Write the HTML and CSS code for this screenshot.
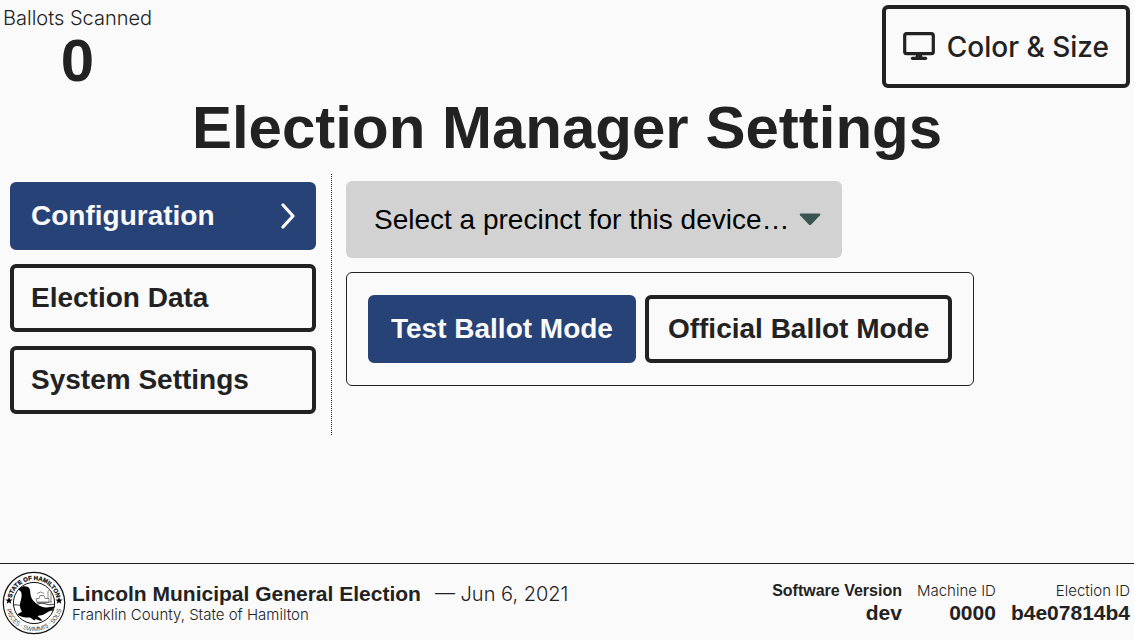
FILE: index.html
```html
<!DOCTYPE html>
<html lang="en">
<head>
<meta charset="utf-8">
<meta name="viewport" content="width=device-width, initial-scale=1">
<title>Election Manager Settings</title>
<link rel="stylesheet" href="styles.css">
</head>
<body>
<header class="topbar">
  <div class="counter">
    <span class="counter-label">Ballots Scanned</span>
    <span class="counter-value">0</span>
  </div>
  <button class="button display-button" type="button">
    <svg class="display-icon" viewBox="0 0 32 29" aria-hidden="true">
      <rect x="1.7" y="1.7" width="28.6" height="20" rx="2" fill="none" stroke="currentColor" stroke-width="3.2"/>
      <path d="M13.2 22h5.6l.7 3h-7z" fill="currentColor"/>
      <path d="M9.4 26.3h13.2" stroke="currentColor" stroke-width="3.2" stroke-linecap="round"/>
    </svg>
    <span>Color &amp; Size</span>
  </button>
</header>
<h1 class="title">Election Manager Settings</h1>
<div class="content">
  <nav class="tabs" aria-label="Settings">
    <button class="button button-primary tab" type="button" aria-current="page">
      <span>Configuration</span>
      <svg class="chevron" viewBox="0 0 16 26" aria-hidden="true">
        <path d="M4 2l10 11L4 24" fill="none" stroke="currentColor" stroke-width="3.2" stroke-linecap="round" stroke-linejoin="round"/>
      </svg>
    </button>
    <button class="button tab" type="button">Election Data</button>
    <button class="button tab" type="button">System Settings</button>
  </nav>
  <main class="panel">
    <div class="picker">
      <select class="picker-select" aria-label="Precinct">
        <option>Select a precinct for this device…</option>
      </select>
      <svg class="picker-arrow" viewBox="0 0 22 13" aria-hidden="true">
        <path d="M1.5.5h19q1.5.3.5 1.700l-9 9.500q-1 .8-2 0l-9-9.500Q0 .8 1.500.5z" fill="#3a5450"/>
      </svg>
    </div>
    <div class="mode-card" role="group" aria-label="Ballot mode">
      <button class="button button-primary mode" type="button" aria-pressed="true">Test Ballot Mode</button>
      <button class="button mode" type="button" aria-pressed="false">Official Ballot Mode</button>
    </div>
  </main>
</div>
<footer class="footer">
  <svg class="seal" viewBox="0 0 64 64" role="img" aria-label="Seal of the State of Hamilton">
    <defs>
      <path id="arc-top" d="M9 32a23 23 0 0 1 46 0"/>
      <path id="arc-bottom" d="M3.800 32a28.200 28.200 0 0 0 56.400 0"/>
    </defs>
    <circle cx="32" cy="32" r="30.700" fill="#fff" stroke="#111" stroke-width="1.200"/>
    <circle cx="32" cy="32" r="20.600" fill="none" stroke="#111" stroke-width="1"/>
    <text class="seal-name"><textPath href="#arc-top" startOffset="50%">STATE OF HAMILTON</textPath></text>
    <text class="seal-motto"><textPath href="#arc-bottom" startOffset="50%">PISCES · SWIMMIS · SOLIS</textPath></text>
    <path id="star" d="M7 26l1 2.400 2.600.1-2 1.700.7 2.500L7 31.300l-2.300 1.400.7-2.500-2-1.700 2.600-.1z" fill="#000"/>
    <use href="#star" x="50"/>
    <path d="M12 34c3-1 4 1 7 0m10-1c3-1 4 1 7 0s5-1 8 0 5 1 8 0" fill="none" stroke="#222" stroke-width=".9"/>
    <path d="M34 27.500h3l1-3h4l1 3h4v4H35zm1-5q4-3 7 0m4 5v-7l1.500-2 1.500 2v11M35 31h15" fill="none" stroke="#555" stroke-width=".7"/>
    <path d="M16.500 17.500l4-2c3-.5 5.800 0 7 2 1 2 .6 4 1.200 7 .8 3.500 3 6 6 8.500 3 2.300 6 3.300 9.300 3.500 3 .2 5-1 9.500-1l-3 2.500 1 1.500c-4 .2-6 1.500-8 3-2.500 1.500-5 2-8 2.500 1 1.500 3.500 2.500 5 4.500-2.500.5-5-.5-7-1.500l-1 1.500-4.500-3c-4 .3-8 0-13-3l5-3c-2.300-3-2.500-6.500-1.500-10 1-3 1.500-6 .8-9-.5-1.500-2.300-2-2.800-4z" fill="#000"/>
  </svg>
  <div class="election">
    <div class="election-title"><strong>Lincoln Municipal General Election</strong><span class="election-date">— Jun 6, 2021</span></div>
    <div class="election-place">Franklin County, State of Hamilton</div>
  </div>
  <dl class="details">
    <div class="detail"><dt class="detail-label detail-label-strong">Software Version</dt><dd class="detail-value">dev</dd></div>
    <div class="detail"><dt class="detail-label">Machine ID</dt><dd class="detail-value">0000</dd></div>
    <div class="detail"><dt class="detail-label">Election ID</dt><dd class="detail-value">b4e07814b4</dd></div>
  </dl>
</footer>
</body>
</html>
```
FILE: styles.css
```css
* {
  box-sizing: border-box;
}

body {
  display: flex;
  flex-direction: column;
  min-height: 100vh;
  margin: 0;
  background: #fafafa;
  color: #222;
  font-family: "Liberation Sans", Arial, sans-serif;
}

.topbar {
  display: flex;
  justify-content: space-between;
  align-items: flex-start;
  padding: 5px 4px 0 3px;
}

.counter {
  display: flex;
  flex-direction: column;
  align-items: center;
}

.counter-label {
  font-family: Inter, sans-serif;
  font-size: 20px;
  font-weight: 300;
  line-height: 26px;
}

.counter-value {
  font-size: 60px;
  font-weight: 700;
  line-height: 60px;
}

.button {
  display: flex;
  align-items: center;
  min-height: 68px;
  padding: 0 17px;
  border: 4px solid #222;
  border-radius: 6px;
  background: #fafafa;
  color: #222;
  font-family: inherit;
  font-size: 28px;
  font-weight: 700;
  line-height: 32px;
}

.button-primary {
  border-color: #274277;
  background: #274277;
  color: #fafafa;
}

.display-button {
  gap: 12px;
  min-height: 83px;
  font-family: Inter, sans-serif;
  font-weight: 500;
}

.display-icon {
  width: 32px;
  height: 29px;
}

.title {
  margin: 2px 0 11px;
  font-size: 60px;
  font-weight: 700;
  line-height: 70px;
  text-align: center;
}

.content {
  display: flex;
  align-items: flex-start;
  flex: 1;
}

.tabs {
  display: flex;
  flex-direction: column;
  gap: 14px;
  flex: 0 0 332px;
  padding: 8px 15px 21px 10px;
  border-right: 1px dotted #222;
}

.tab {
  justify-content: space-between;
  text-align: left;
}

.chevron {
  width: 16px;
  height: 26px;
}

.panel {
  display: flex;
  flex-direction: column;
  align-items: flex-start;
  gap: 14px;
  padding: 7px 14px;
}

.picker {
  position: relative;
}

.picker-select {
  appearance: none;
  height: 77px;
  padding: 0 52px 0 28px;
  border: 0;
  border-radius: 6px;
  background: #d2d2d2;
  color: #000;
  font-family: inherit;
  font-size: 28px;
}

.picker-arrow {
  position: absolute;
  top: 32px;
  right: 21px;
  width: 22px;
  height: 13px;
  pointer-events: none;
}

.mode-card {
  display: flex;
  gap: 9px;
  padding: 22px 21px;
  border: 1px solid #222;
  border-radius: 6px;
}

.mode {
  padding: 0 19px;
}

.footer {
  display: flex;
  align-items: center;
  gap: 6px;
  padding: 7px 4px 5px 2px;
  border-top: 1px solid #222;
}

.seal {
  flex: none;
  width: 64px;
  height: 64px;
}

.seal-name {
  font-size: 6px;
  font-weight: 700;
  stroke: #222;
  stroke-width: 0.3;
  text-anchor: middle;
}

.seal-motto {
  font-family: Inter, sans-serif;
  font-size: 6px;
  font-weight: 300;
  text-anchor: middle;
}

.election {
  flex: 1;
}

.election-title {
  display: flex;
  align-items: baseline;
  gap: 14px;
  font-size: 21px;
  line-height: 24px;
}

.election-date {
  font-family: Inter, sans-serif;
  font-size: 20px;
  font-weight: 300;
}

.election-place {
  font-family: Inter, sans-serif;
  font-size: 15px;
  font-weight: 300;
  line-height: 18px;
}

.details {
  display: flex;
  gap: 15px;
  margin: 0;
  text-align: right;
}

.detail-label {
  font-family: Inter, sans-serif;
  font-size: 15px;
  font-weight: 300;
  line-height: 20px;
}

.detail-label-strong {
  font-family: inherit;
  font-size: 16px;
  font-weight: 700;
}

.detail-value {
  margin: 0;
  font-size: 21px;
  font-weight: 700;
  line-height: 24px;
}
```
